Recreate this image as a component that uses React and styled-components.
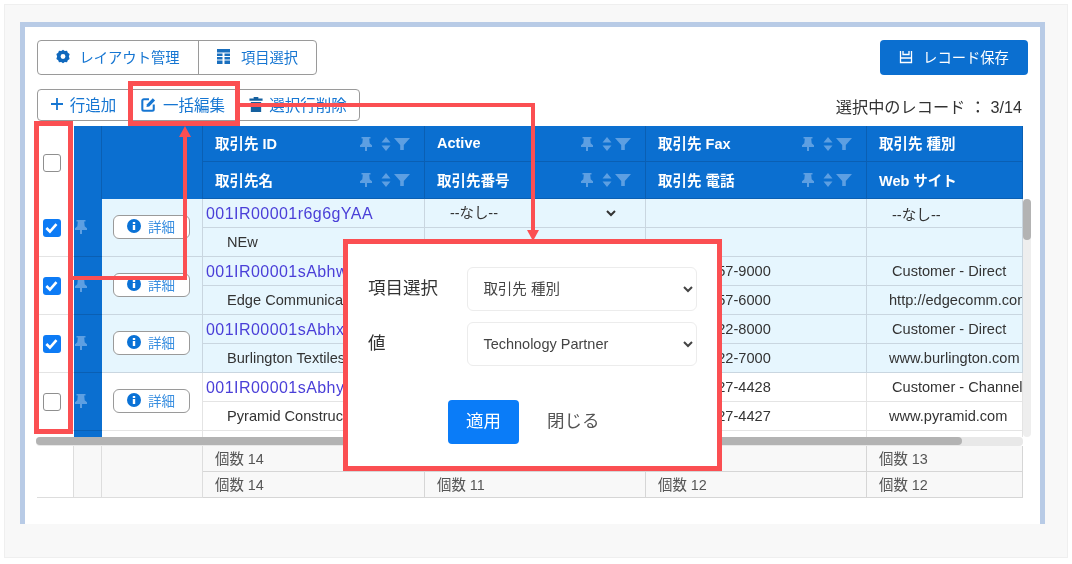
import React from "react";
import styled, { createGlobalStyle } from "styled-components";

const COLS = "37px 28px 101px 222px 221px 221px 156px";
const FONT = `"Liberation Sans", "Noto Sans CJK JP", sans-serif`;

const rows = [
  { id: "001IR00001r6g6gYAA", name: "NEw", active: true, type: "--なし--", web: "", checked: true, tint: true },
  { id: "001IR00001sAbhwYAC", name: "Edge Communications", fax: "(512) 757-9000", phone: "(512) 757-6000", type: "Customer - Direct", web: "http://edgecomm.com", checked: true, tint: true },
  { id: "001IR00001sAbhxYAC", name: "Burlington Textiles", fax: "(336) 222-8000", phone: "(336) 222-7000", type: "Customer - Direct", web: "www.burlington.com", checked: true, tint: true },
  { id: "001IR00001sAbhyYAC", name: "Pyramid Construction", fax: "(014) 427-4428", phone: "(014) 427-4427", type: "Customer - Channel", web: "www.pyramid.com", checked: false, tint: false },
];

const App = () => {
  return (
    <Page>
      <GlobalStyle />
      <Panel>
        <Frame>
          <TopBar>
            <ButtonGroup>
              <GroupButton $w={160}><GearIcon />レイアウト管理</GroupButton>
              <GroupButton $w={118}><ColumnsIcon />項目選択</GroupButton>
            </ButtonGroup>
            <SaveButton><SaveIcon />レコード保存</SaveButton>
          </TopBar>
          <ActionBar>
            <ButtonGroup>
              <ActionButton $w={91}><PlusIcon />行追加</ActionButton>
              <ActionButton $w={108}><EditIcon />一括編集</ActionButton>
              <ActionButton $w={122}><TrashIcon />選択行削除</ActionButton>
            </ButtonGroup>
            <SelectedCount>選択中のレコード ： 3/14</SelectedCount>
          </ActionBar>
          <Table>
            <HeadGrid>
              <CheckHead><Check /></CheckHead>
              <BlueHead />
              <BlueHead />
              <HeadCell>取引先 ID<HeadIcons /></HeadCell>
              <HeadCell>Active<HeadIcons /></HeadCell>
              <HeadCell>取引先 Fax<HeadIcons /></HeadCell>
              <HeadCell>取引先 種別</HeadCell>
              <HeadCell>取引先名<HeadIcons /></HeadCell>
              <HeadCell>取引先番号<HeadIcons /></HeadCell>
              <HeadCell>取引先 電話<HeadIcons /></HeadCell>
              <HeadCell>Web サイト</HeadCell>
            </HeadGrid>
            <Body>
              <RowsPane>
                {rows.map((r) => (
                  <Row key={r.id} $tint={r.tint}>
                    <CheckCell><Check $on={r.checked} /></CheckCell>
                    <PinCell><PinIcon /></PinCell>
                    <DetailCell>
                      <DetailButton><InfoIcon />詳細</DetailButton>
                    </DetailCell>
                    <IdCell>{r.id}</IdCell>
                    <Cell>
                      {r.active ? <InlineSelect><option>--なし--</option></InlineSelect> : null}
                    </Cell>
                    <Cell $pad={25}>{r.fax}</Cell>
                    <Cell $pad={25}>{r.type}</Cell>
                    <Cell $pad={24}>{r.name}</Cell>
                    <Cell />
                    <Cell $pad={25}>{r.phone}</Cell>
                    <Cell $pad={22}>{r.web}</Cell>
                  </Row>
                ))}
                <Row>
                  <CheckCell />
                  <PinCell />
                  <DetailCell />
                  <Cell /><Cell /><Cell /><Cell />
                </Row>
              </RowsPane>
              <VBar><VThumb /></VBar>
            </Body>
            <HBar><HThumb /></HBar>
            <FootGrid>
              <FootBlank />
              <FootSide />
              <FootSide />
              <FootCell>個数 14</FootCell>
              <FootCell>個数 11</FootCell>
              <FootCell>個数 12</FootCell>
              <FootCell>個数 13</FootCell>
              <FootCell>個数 14</FootCell>
              <FootCell>個数 11</FootCell>
              <FootCell>個数 12</FootCell>
              <FootCell>個数 12</FootCell>
            </FootGrid>
          </Table>
        </Frame>
      </Panel>

      <CheckColumnMark />
      <BulkEditMark />
      <Callouts viewBox="0 0 1072 564">
        <path d="M72 278H185V134" />
        <path d="M239 105H533V232" />
        <polygon points="185,126 179,137 191,137" />
        <polygon points="533,241 527,230 539,230" />
      </Callouts>

      <Modal>
        <Field>
          <FieldLabel>項目選択</FieldLabel>
          <FieldSelect><option>取引先 種別</option></FieldSelect>
        </Field>
        <Field>
          <FieldLabel>値</FieldLabel>
          <FieldSelect><option>Technology Partner</option></FieldSelect>
        </Field>
        <ModalActions>
          <ApplyButton>適用</ApplyButton>
          <CloseButton>閉じる</CloseButton>
        </ModalActions>
      </Modal>
    </Page>
  );
};

const GearIcon = () => (
  <Svg viewBox="0 0 16 16" $w={14} $h={15} $mr={9} fill="#0f68bd">
    <path fillRule="evenodd" d="M8 .3l2 1.5 2.6-.4.9 2.3 2.1 1.5-.9 2.8.9 2.8-2.1 1.5-.9 2.3-2.6-.4L8 15.7l-2-1.5-2.6.4-.9-2.3-2.1-1.5.9-2.8-.9-2.8 2.1-1.5.9-2.3 2.6.4L8 .3zM8 5.2a2.8 2.8 0 100 5.6 2.8 2.8 0 000-5.6z" />
  </Svg>
);

const ColumnsIcon = () => (
  <Svg viewBox="0 0 13 15" $w={13} $h={15} $mr={11} fill="#1a6fbe">
    <path fillRule="evenodd" d="M0 0h13v3.5H0zM0 4.5h5.5v2.6H0zM7.5 4.5H13v2.6H7.5zM0 8h5.5v2.6H0zM7.5 8H13v2.6H7.5zM0 11.6h5.5V15H0zM7.5 11.6H13V15H7.5z" />
  </Svg>
);

const SaveIcon = () => (
  <Svg viewBox="0 0 14 14" $w={14} $h={14} $mr={10} fill="none" stroke="#fff" strokeWidth="1.3">
    <path d="M1.5 1v11.5h11V1M4 1v3.5h6V1M1.5 8h11" />
  </Svg>
);

const PlusIcon = () => (
  <Svg viewBox="0 0 12 12" $w={12} $h={12} $mr={7} fill="none" stroke="#1676d2" strokeWidth="1.8">
    <path d="M6 0v12M0 6h12" />
  </Svg>
);

const EditIcon = () => (
  <Svg viewBox="0 0 16 16" $w={15} $h={15} $mr={7} fill="none" stroke="#1676d2" strokeWidth="2.2">
    <path d="M8.5 2.4H3a1.6 1.6 0 00-1.6 1.6v9A1.6 1.6 0 003 14.6h9a1.6 1.6 0 001.6-1.6V8" />
    <path d="M5.8 10.6l.6-3L12.6 1.4l2.4 2.4-6.2 6.2z" fill="#1676d2" stroke="none" />
  </Svg>
);

const TrashIcon = () => (
  <Svg viewBox="0 0 14 16" $w={14} $h={15} $mr={6} fill="#15609f">
    <path d="M0 1.5h4.5V0h5v1.5H14v2.4H0zM1.5 5.2h11V16h-11z" />
  </Svg>
);

const PinIcon = ({ color = "#5d9fe2" }) => (
  <Svg viewBox="0 0 12 14" $w={12} $h={14} fill={color}>
    <path d="M1.5 0h9v1.6H9.2l.5 4.6 2.3 2V10H7v4H5v-4H0V8.2l2.3-2 .5-4.6H1.5z" />
  </Svg>
);

const InfoIcon = () => (
  <Svg viewBox="0 0 14 14" $w={14} $h={14} $mr={7}>
    <circle cx="7" cy="7" r="7" fill="#0a72d6" />
    <path d="M5.8 3h2.4v2H5.8zM5.8 6h2.4v5H5.8z" fill="#fff" />
  </Svg>
);

const HeadIcons = () => (
  <HeadIconRow>
    <PinIcon />
    <SortIcon viewBox="0 0 10 14" $w={10} $h={14} fill="#5d9fe2">
      <path d="M5 0l4.5 5.5h-9zM5 14L.5 8.5h9z" />
    </SortIcon>
    <Svg viewBox="0 0 16 12" $w={16} $h={12} fill="#5d9fe2">
      <path d="M0 0h16L9.8 7v5H6.2V7z" />
    </Svg>
  </HeadIconRow>
);

const Check = ({ $on }) => (
  <CheckBox $on={$on}>
    {$on ? (
      <svg viewBox="0 0 16 16" width="15" height="15" fill="none" stroke="#fff" strokeWidth="2.8">
        <path d="M2.5 8.5l3.8 3.8 7-8" />
      </svg>
    ) : null}
  </CheckBox>
);

export default App;

const GlobalStyle = createGlobalStyle`
  html, body {
    margin: 0;
    padding: 0;
    background: #ffffff;
  }
  body {
    font-family: ${FONT};
  }
`;

const Page = styled.div`
  position: relative;
  width: 1072px;
  height: 564px;
  box-sizing: border-box;
  padding: 4px 4px 6px;
  overflow: hidden;
  filter: blur(0.45px);
`;

const Panel = styled.div`
  height: 100%;
  box-sizing: border-box;
  padding: 17px 22px 33px 15px;
  background: #f8f8f8;
  border: 1px solid #efefef;
`;

const Frame = styled.div`
  height: 100%;
  box-sizing: border-box;
  padding: 13px 12px 0;
  background: #ffffff;
  border: solid #b8cbe6;
  border-width: 5px 5px 0;
`;

const TopBar = styled.div`
  display: flex;
  justify-content: space-between;
  align-items: flex-start;
`;

const ButtonGroup = styled.div`
  display: flex;
  background: #ffffff;
  border: 1px solid #9a9a9a;
  border-radius: 4px;
`;

const GroupButton = styled.div`
  display: flex;
  align-items: center;
  justify-content: center;
  box-sizing: border-box;
  width: ${(p) => p.$w}px;
  height: 33px;
  padding-bottom: 2px;
  font-size: 14.3px;
  color: #1676d2;
  & + & {
    border-left: 1px solid #9a9a9a;
  }
`;

const ActionButton = styled.div`
  display: flex;
  align-items: center;
  justify-content: center;
  box-sizing: border-box;
  width: ${(p) => p.$w}px;
  height: 30px;
  padding-bottom: 2px;
  font-size: 15.5px;
  color: #1676d2;
`;

const SaveButton = styled.div`
  display: flex;
  align-items: center;
  justify-content: center;
  box-sizing: border-box;
  width: 148px;
  height: 35px;
  padding-bottom: 2px;
  font-size: 14.3px;
  color: #ffffff;
  background: #0b6fd0;
  border-radius: 4px;
`;

const ActionBar = styled.div`
  display: flex;
  justify-content: space-between;
  align-items: center;
  margin: 14px 6px 5px 0;
`;

const SelectedCount = styled.div`
  font-size: 16.2px;
  color: #333333;
  padding-top: 1px;
`;

const Svg = styled.svg`
  flex: none;
  width: ${(p) => p.$w}px;
  height: ${(p) => p.$h}px;
  margin-right: ${(p) => p.$mr || 0}px;
`;

const SortIcon = styled(Svg)`
  margin: 0 3px 0 9px;
`;

const Table = styled.div`
  width: 994px;
`;

const HeadGrid = styled.div`
  display: grid;
  width: 986px;
  grid-template-columns: ${COLS};
  grid-template-rows: 36px 37px;
`;

const BlueHead = styled.div`
  grid-row: 1 / span 2;
  background: #0b6fd0;
  border-right: 1px solid #0a5fb3;
`;

const CheckHead = styled.div`
  grid-row: 1 / span 2;
  display: flex;
  align-items: center;
  justify-content: center;
  box-sizing: border-box;
  padding-right: 8px;
  background: #ffffff;
`;

const HeadCell = styled.div`
  display: flex;
  align-items: center;
  justify-content: space-between;
  box-sizing: border-box;
  padding: 0 14px 2px 12px;
  font-size: 14.5px;
  font-weight: 700;
  color: #ffffff;
  background: #0b6fd0;
  border-right: 1px solid #0a5fb3;
  border-bottom: 1px solid #0a5fb3;
  white-space: nowrap;
  overflow: hidden;
`;

const HeadIconRow = styled.div`
  display: flex;
  align-items: center;
  padding-top: 2px;
`;

const CheckBox = styled.div`
  display: flex;
  align-items: center;
  justify-content: center;
  box-sizing: border-box;
  width: 18px;
  height: 18px;
  border-radius: 3px;
  background: ${(p) => (p.$on ? "#0d7bf5" : "#ffffff")};
  border: ${(p) => (p.$on ? "none" : "1px solid #8f8f8f")};
`;

const Body = styled.div`
  display: flex;
  height: 238px;
`;

const RowsPane = styled.div`
  width: 986px;
  overflow: hidden;
`;

const Row = styled.div`
  display: grid;
  grid-template-columns: ${COLS};
  grid-template-rows: 29px 29px;
  background: ${(p) => (p.$tint ? "#e6f6fe" : "#ffffff")};
  --line: ${(p) => (p.$tint ? "#c9d6e0" : "#e4e4e4")};
`;

const CheckCell = styled.div`
  grid-row: 1 / span 2;
  display: flex;
  align-items: center;
  justify-content: center;
  box-sizing: border-box;
  padding-right: 8px;
  background: #ffffff;
  border-bottom: 1px solid #e4e4e4;
`;

const PinCell = styled.div`
  grid-row: 1 / span 2;
  display: flex;
  align-items: center;
  box-sizing: border-box;
  padding: 0 0 2px 1px;
  background: #0b6fd0;
  border-bottom: 1px solid #0a5fb3;
`;

const DetailCell = styled.div`
  grid-row: 1 / span 2;
  display: flex;
  align-items: center;
  justify-content: center;
  box-sizing: border-box;
  padding: 0 2px 2px 0;
  border-right: 1px solid var(--line);
  border-bottom: 1px solid var(--line);
`;

const DetailButton = styled.div`
  display: flex;
  align-items: center;
  justify-content: center;
  box-sizing: border-box;
  width: 77px;
  height: 24px;
  padding-bottom: 1px;
  font-size: 13.5px;
  color: #3a8fe0;
  background: #ffffff;
  border: 1px solid #9a9a9a;
  border-radius: 6px;
`;

const Cell = styled.div`
  display: flex;
  align-items: center;
  box-sizing: border-box;
  padding-left: ${(p) => p.$pad || 0}px;
  font-size: 14.6px;
  color: #333333;
  white-space: nowrap;
  overflow: hidden;
  border-right: 1px solid var(--line);
  border-bottom: 1px solid var(--line);
`;

const IdCell = styled(Cell)`
  padding-left: 3px;
  padding-top: 2px;
  font-size: 16px;
  letter-spacing: 0.45px;
  color: #4a3fd8;
`;

const InlineSelect = styled.select`
  width: 182px;
  margin-left: 12px;
  padding-left: 9px;
  font-family: ${FONT};
  font-size: 14.4px;
  color: #333333;
  background: transparent;
  border: none;
`;

const VBar = styled.div`
  width: 8px;
  background: #eeeeee;
  border-radius: 4px;
`;

const VThumb = styled.div`
  height: 41px;
  background: #b3b3b3;
  border-radius: 4px;
`;

const HBar = styled.div`
  width: 987px;
  height: 9px;
  margin-left: -1px;
  background: #e8e8e8;
  border-radius: 4px;
`;

const HThumb = styled.div`
  width: 926px;
  height: 8px;
  background: #b3b3b3;
  border-radius: 4px;
`;

const FootGrid = styled.div`
  display: grid;
  width: 986px;
  grid-template-columns: ${COLS};
  grid-template-rows: 26px 26px;
`;

const FootBlank = styled.div`
  grid-row: 1 / span 2;
  background: #ffffff;
  border-right: 1px solid #dddddd;
  border-bottom: 1px solid #dddddd;
`;

const FootSide = styled.div`
  grid-row: 1 / span 2;
  background: #f8f8f8;
  border-right: 1px solid #dddddd;
  border-bottom: 1px solid #dddddd;
`;

const FootCell = styled.div`
  display: flex;
  align-items: center;
  box-sizing: border-box;
  padding: 0 0 2px 12px;
  font-size: 14.4px;
  color: #555555;
  background: #f8f8f8;
  border-right: 1px solid #d6d6d6;
  border-bottom: 1px solid #d6d6d6;
`;

const CheckColumnMark = styled.div`
  position: absolute;
  left: 34px;
  top: 121px;
  width: 39px;
  height: 313px;
  box-sizing: border-box;
  border: 5px solid #fb4f52;
`;

const BulkEditMark = styled.div`
  position: absolute;
  left: 128px;
  top: 81px;
  width: 112px;
  height: 45px;
  box-sizing: border-box;
  border: 5px solid #fb4f52;
`;

const Callouts = styled.svg`
  position: absolute;
  left: 0;
  top: 0;
  width: 1072px;
  height: 564px;
  pointer-events: none;
  path {
    fill: none;
    stroke: #fb4f52;
    stroke-width: 4;
  }
  polygon {
    fill: #fb4f52;
  }
`;

const Modal = styled.div`
  position: absolute;
  left: 343px;
  top: 239px;
  width: 379px;
  height: 232px;
  box-sizing: border-box;
  padding: 23px 20px 0;
  background: #ffffff;
  border: 5px solid #fb4f52;
`;

const Field = styled.div`
  display: flex;
  align-items: center;
  margin-bottom: 11px;
`;

const FieldLabel = styled.div`
  width: 99px;
  margin-right: 1px;
  padding-bottom: 5px;
  font-size: 17.5px;
  color: #333333;
`;

const FieldSelect = styled.select`
  width: 231px;
  height: 44px;
  padding-left: 11px;
  font-family: ${FONT};
  font-size: 14.5px;
  color: #444444;
  background: #ffffff;
  border: 1px solid #ececec;
  border-radius: 6px;
`;

const ModalActions = styled.div`
  display: flex;
  align-items: center;
  margin: 34px 0 0 80px;
`;

const ApplyButton = styled.div`
  display: flex;
  align-items: center;
  justify-content: center;
  box-sizing: border-box;
  width: 71px;
  height: 44px;
  padding-bottom: 5px;
  font-size: 17.5px;
  color: #ffffff;
  background: #0a7cf8;
  border-radius: 4px;
`;

const CloseButton = styled.div`
  margin-left: 28px;
  padding-bottom: 5px;
  font-size: 17.5px;
  color: #555555;
`;
